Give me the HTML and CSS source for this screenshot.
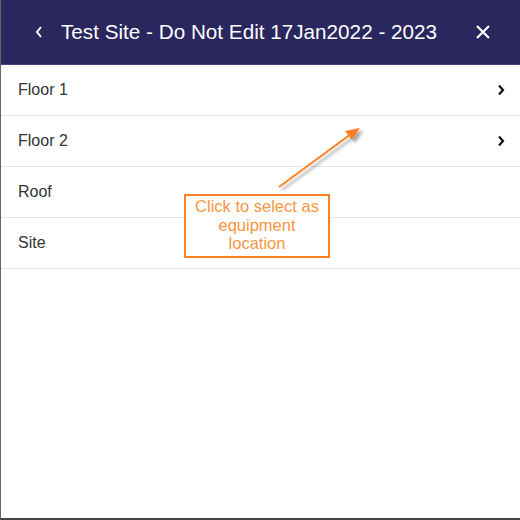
FILE: index.html
```html
<!DOCTYPE html>
<html lang="en">
<head>
    <meta charset="UTF-8">
    <title>Select location</title>
    <link rel="stylesheet" href="styles.css">
</head>
<body>
    <div class="panel">
        <header class="topbar">
            <button class="back" aria-label="Back">
                <svg width="10" height="14" viewBox="0 0 10 14"><path d="M7 2 L3 7 L7 12" fill="none" stroke="#fff" stroke-width="2"/></svg>
            </button>
            <h1>Test Site - Do Not Edit 17Jan2022 - 2023</h1>
            <button class="close" aria-label="Close">
                <svg width="16" height="16" viewBox="0 0 16 16"><path d="M2 2 L14 14 M14 2 L2 14" fill="none" stroke="#fff" stroke-width="2.2"/></svg>
            </button>
        </header>

        <ul class="locations">
            <li>Floor 1 <span class="chev"><svg width="8" height="12" viewBox="0 0 8 12"><path d="M2 1.5 L6 6 L2 10.5" fill="none" stroke="#111" stroke-width="2.2"/></svg></span></li>
            <li>Floor 2 <span class="chev"><svg width="8" height="12" viewBox="0 0 8 12"><path d="M2 1.5 L6 6 L2 10.5" fill="none" stroke="#111" stroke-width="2.2"/></svg></span></li>
            <li>Roof</li>
            <li>Site</li>
        </ul>

        <!-- annotation -->
        <svg class="arrow" width="110" height="90" viewBox="0 0 110 90">
            <defs>
                <filter id="sh" x="-20%" y="-20%" width="150%" height="150%">
                    <feDropShadow dx="3" dy="3" stdDeviation="1.5" flood-color="#000" flood-opacity="0.35"/>
                </filter>
            </defs>
            <g filter="url(#sh)">
                <line x1="8" y1="67" x2="80" y2="14" stroke="#ff8023" stroke-width="2"/>
                <path d="M89 8 L74 11 L81 20 Z" fill="#ff8023"/>
            </g>
        </svg>
        <div class="note">Click to select as equipment location</div>
    </div>
</body>
</html>
```

FILE: styles.css
```css
body {
    margin: 0;
    font-family: "Liberation Sans", Arial, sans-serif;
    background-color: #fff;
}
.panel {
    position: relative;
    height: 520px;
    box-sizing: border-box;
    border-left: 1px solid #666;
    border-bottom: 2px solid #444;
}
.topbar {
    display: flex;
    align-items: center;
    height: 65px;
    background-color: #2a265e;
    color: #fff;
    padding: 0 29px 0 26px;
    border-bottom: 1px solid #4a4880;
    box-sizing: border-box;
}
.topbar h1 {
    margin: 0 0 0 17px;
    font-size: 20.7px;
    font-weight: normal;
    padding-bottom: 1px;
}
.topbar button {
    background: none;
    border: 0;
    padding: 0;
    display: flex;
}
.back {
    margin-left: 7px;
}
.close {
    margin-left: auto;
}
.locations {
    list-style-type: none;
    margin: 0;
    padding: 0;
}
.locations li {
    display: flex;
    align-items: center;
    height: 50px;
    padding: 0 15px 0 17px;
    border-bottom: 1px solid #e6e6e6;
    font-size: 16px;
    color: #333;
}
.chev {
    margin-left: auto;
    display: flex;
}
.arrow {
    position: absolute;
    left: 270px;
    top: 120px;
}
.note {
    position: absolute;
    left: 183px;
    top: 194px;
    width: 128px;
    height: 59px;
    padding: 1px 7px 0;
    border: 2px solid #ff8023;
    background: #fff;
    color: #f8963f;
    font-size: 16.5px;
    line-height: 18.5px;
    text-align: center;
    box-sizing: content-box;
}
```
